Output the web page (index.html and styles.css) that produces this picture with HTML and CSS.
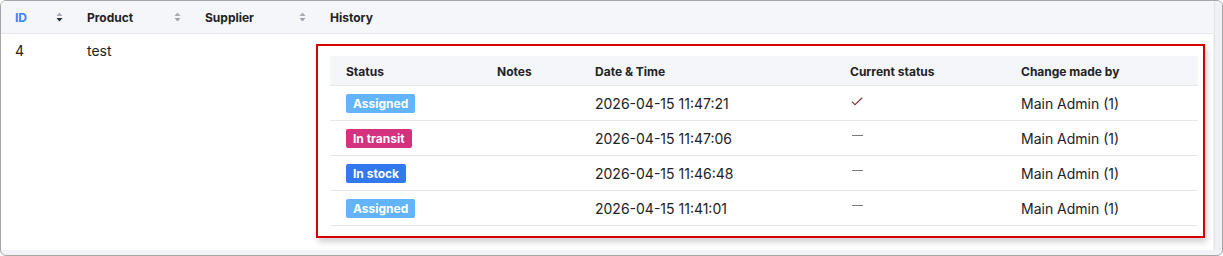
FILE: index.html
```html
<!DOCTYPE html>
<html>
<head>
<meta charset="utf-8">
<link rel="stylesheet" href="styles.css">
</head>
<body>
<div class="frame">
  <div class="wrap">
    <table class="grid">
      <colgroup>
        <col class="c-id"><col class="c-prod"><col class="c-sup"><col class="c-hist">
      </colgroup>
      <thead>
        <tr>
          <th><div class="th-in"><span class="active">ID</span><svg class="sort" viewBox="0 0 7 10"><path class="up" d="M3.5 0.5 L6.5 4 L0.5 4 Z"/><path class="down dark" d="M0.5 6 L6.5 6 L3.5 9.5 Z"/></svg></div></th>
          <th><div class="th-in"><span>Product</span><svg class="sort" viewBox="0 0 7 10"><path class="up" d="M3.5 0.5 L6.5 4 L0.5 4 Z"/><path class="down" d="M0.5 6 L6.5 6 L3.5 9.5 Z"/></svg></div></th>
          <th><div class="th-in"><span>Supplier</span><svg class="sort" viewBox="0 0 7 10"><path class="up" d="M3.5 0.5 L6.5 4 L0.5 4 Z"/><path class="down" d="M0.5 6 L6.5 6 L3.5 9.5 Z"/></svg></div></th>
          <th><div class="th-in"><span>History</span></div></th>
        </tr>
      </thead>
      <tbody>
        <tr>
          <td class="plain">4</td>
          <td class="plain">test</td>
          <td class="plain"></td>
          <td class="hist">
            <div class="hbox">
              <table class="inner">
                <colgroup>
                  <col class="i1"><col class="i2"><col class="i3"><col class="i4"><col class="i5">
                </colgroup>
                <thead>
                  <tr><th>Status</th><th>Notes</th><th>Date &amp; Time</th><th>Current status</th><th>Change made by</th></tr>
                </thead>
                <tbody>
                  <tr>
                    <td><span class="badge b-assigned">Assigned</span></td>
                    <td></td>
                    <td>2026-04-15 11:47:21</td>
                    <td><svg class="check" viewBox="0 0 12 9"><path d="M0.8 4.6 L4 7.6 L11.2 0.8"/></svg></td>
                    <td>Main Admin (1)</td>
                  </tr>
                  <tr>
                    <td><span class="badge b-transit">In transit</span></td>
                    <td></td>
                    <td>2026-04-15 11:47:06</td>
                    <td><span class="dash"></span></td>
                    <td>Main Admin (1)</td>
                  </tr>
                  <tr>
                    <td><span class="badge b-stock">In stock</span></td>
                    <td></td>
                    <td>2026-04-15 11:46:48</td>
                    <td><span class="dash"></span></td>
                    <td>Main Admin (1)</td>
                  </tr>
                  <tr>
                    <td><span class="badge b-assigned">Assigned</span></td>
                    <td></td>
                    <td>2026-04-15 11:41:01</td>
                    <td><span class="dash"></span></td>
                    <td>Main Admin (1)</td>
                  </tr>
                </tbody>
              </table>
            </div>
          </td>
        </tr>
      </tbody>
    </table>
  </div>
  <div class="vtrack"></div>
</div>
</body>
</html>
```

FILE: styles.css
```css
html, body {
  margin: 0;
  padding: 0;
  background: #ffffff;
}
body {
  font-family: Inter, "Liberation Sans", sans-serif;
  color: #222;
}
.frame {
  box-sizing: border-box;
  width: 1223px;
  height: 256px;
  border: 1px solid #a6a6a6;
  border-radius: 6px;
  background: #f2f3f7;
  display: flex;
  overflow: hidden;
}
.wrap {
  width: 1212px;
  height: 249px;
  background: #fff;
  flex: none;
}
.vtrack {
  flex: none;
  width: 7px;
  margin-left: 1px;
  height: 249px;
  background: #eef0f4;
  border-left: 1px solid #e2e4ea;
  border-top-left-radius: 3px;
}
.grid {
  border-collapse: collapse;
  table-layout: fixed;
  width: 1212px;
}
.c-id { width: 72px; }
.c-prod { width: 118px; }
.c-sup { width: 125px; }
.grid > thead th {
  height: 32px;
  padding: 0 14px;
  background: #f5f6fa;
  border-bottom: 1px solid #e4e7ec;
  text-align: left;
  font-size: 12px;
  font-weight: 700;
  color: #222;
}
.th-in {
  display: flex;
  align-items: center;
  justify-content: space-between;
}
.th-in .active { color: #3b82f6; }
.sort {
  width: 7px;
  height: 10px;
  margin-right: -4px;
}
.sort path { fill: #9ca3af; }
.sort path.dark { fill: #1f2937; }
.sort .up { fill: #a8adb6; }
.grid > tbody > tr > td {
  vertical-align: top;
  padding: 0;
}
.grid td.plain {
  padding: 7px 14px 0;
  font-size: 14px;
  line-height: 20px;
  color: #222;
}
.grid td.hist {
  padding: 10px 0 0 0;
  height: 205px;
}
.hbox {
  box-sizing: border-box;
  width: 889px;
  border: 2px solid #d40000;
  padding: 10px 4px 10px 12px;
  box-shadow: 2px 4px 6px rgba(0, 0, 0, 0.18);
  background: #fff;
}
.inner {
  border-collapse: collapse;
  table-layout: fixed;
  width: 868px;
}
.i1 { width: 151px; }
.i2 { width: 98px; }
.i3 { width: 255px; }
.i4 { width: 171px; }
.inner th {
  height: 28px;
  padding: 1px 16px 0;
  background: #f5f6fa;
  border-bottom: 1px solid #e4e7ec;
  text-align: left;
  font-size: 12px;
  font-weight: 700;
  color: #222;
}
.inner td {
  height: 34px;
  padding: 0 16px;
  border-bottom: 1px solid #e4e7ec;
  font-size: 14px;
  color: #222;
  vertical-align: middle;
}
.badge {
  display: inline-block;
  padding: 0 7px;
  height: 19px;
  line-height: 19px;
  border-radius: 2px;
  font-size: 12px;
  font-weight: 700;
  color: #fff;
  vertical-align: middle;
}
.b-assigned { background: #62b4fc; }
.b-transit { background: #d4317f; }
.b-stock { background: #3278ef; }
.check {
  display: block;
  width: 12px;
  height: 9px;
  margin-left: 1px;
  margin-top: -3px;
}
.check path {
  fill: none;
  stroke: #7d3f3f;
  stroke-width: 1.2;
}
.dash {
  display: block;
  width: 11px;
  height: 1px;
  background: #7a7a7a;
  margin-left: 2px;
  margin-top: -3px;
}
```
